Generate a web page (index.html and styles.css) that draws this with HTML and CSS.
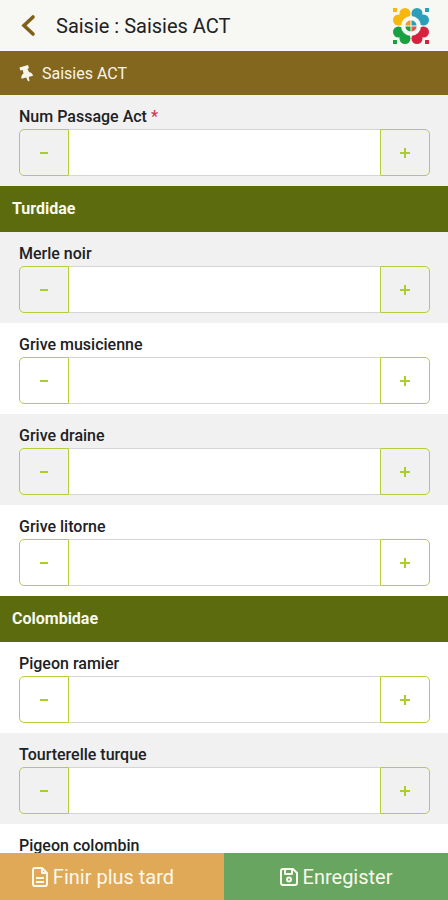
FILE: index.html
```html
<!DOCTYPE html>
<html lang="fr">
<head>
<meta charset="utf-8">
<meta name="viewport" content="width=device-width, initial-scale=1">
<title>Saisie : Saisies ACT</title>
<link rel="stylesheet" href="styles.css">
</head>
<body>
<header class="topbar">
  <button class="back" type="button" aria-label="Retour">
    <svg width="16" height="24" viewBox="0 0 16 24"><path d="M13 3 4 11.500l9 8.500" fill="none" stroke="currentColor" stroke-width="3.600" stroke-linecap="round"/></svg>
  </button>
  <h1 class="title">Saisie : Saisies ACT</h1>
  <svg class="logo" width="36" height="36" viewBox="0 0 36 36" aria-hidden="true">
    <g fill="#f6b70f"><path d="M0 0h4v4H0z"/><circle cx="12" cy="5.500" r="5.500"/><circle cx="5.500" cy="12" r="5.500"/><path d="M7 7l10-2v12H5z"/></g>
    <g fill="#2b9fb8"><path d="M32 0h4v4h-4z"/><circle cx="24" cy="5.500" r="5.500"/><circle cx="30.500" cy="12" r="5.500"/><path d="M29 7 19 5v12h12z"/></g>
    <g fill="#18a043"><path d="M0 32h4v4H0z"/><circle cx="12" cy="30.500" r="5.500"/><circle cx="5.500" cy="24" r="5.500"/><path d="M7 29l10 2V19H5z"/></g>
    <g fill="#d7213f"><path d="M32 32h4v4h-4z"/><circle cx="24" cy="30.500" r="5.500"/><circle cx="30.500" cy="24" r="5.500"/><path d="M29 29l-10 2V19h12z"/></g>
    <circle cx="18" cy="18" r="10" fill="#f8f8f4"/>
    <path d="M17.500 17.500v-5a5 5 0 0 0-5 5z" fill="#f09a28"/>
    <path d="M18.500 17.500v-5a5 5 0 0 1 5 5z" fill="#2b9fb8"/>
    <path d="M17.500 18.500v5a5 5 0 0 1-5-5z" fill="#18a043"/>
    <path d="M18.500 18.500v5a5 5 0 0 0 5-5z" fill="#e0564a"/>
  </svg>
</header>
<div class="subbar">
  <svg width="16" height="18" viewBox="0 0 16 18" aria-hidden="true"><path d="M1.500 3.500 10 1l1 3-1.500 1 1.500 3c2.200.3 3.600 1.700 4 3.800l-4.300 1.200.8 4-1.500.2-1.800-3.700-4.700 1.300c-.5-2.200.2-4 2-5.300L4.800 6l-2.500.5z" fill="currentColor"/></svg>
  <span>Saisies ACT</span>
</div>
<main class="form">
  <section class="group">
    <div class="field"><label for="passage">Num Passage Act <span class="required">*</span></label>
      <div class="stepper"><button type="button" aria-label="Diminuer"><svg class="sign" viewBox="0 0 10 10"><path d="M1 5h8"/></svg></button><input id="passage" type="text" inputmode="numeric" required><button type="button" aria-label="Augmenter"><svg class="sign" viewBox="0 0 10 10"><path d="M0 5h10M5 0v10"/></svg></button></div></div>
  </section>
  <section class="group">
    <h2>Turdidae</h2>
    <div class="field"><label for="merle">Merle noir</label>
      <div class="stepper"><button type="button" aria-label="Diminuer"><svg class="sign" viewBox="0 0 10 10"><path d="M1 5h8"/></svg></button><input id="merle" type="text" inputmode="numeric"><button type="button" aria-label="Augmenter"><svg class="sign" viewBox="0 0 10 10"><path d="M0 5h10M5 0v10"/></svg></button></div></div>
    <div class="field plain"><label for="musicienne">Grive musicienne</label>
      <div class="stepper"><button type="button" aria-label="Diminuer"><svg class="sign" viewBox="0 0 10 10"><path d="M1 5h8"/></svg></button><input id="musicienne" type="text" inputmode="numeric"><button type="button" aria-label="Augmenter"><svg class="sign" viewBox="0 0 10 10"><path d="M0 5h10M5 0v10"/></svg></button></div></div>
    <div class="field"><label for="draine">Grive draine</label>
      <div class="stepper"><button type="button" aria-label="Diminuer"><svg class="sign" viewBox="0 0 10 10"><path d="M1 5h8"/></svg></button><input id="draine" type="text" inputmode="numeric"><button type="button" aria-label="Augmenter"><svg class="sign" viewBox="0 0 10 10"><path d="M0 5h10M5 0v10"/></svg></button></div></div>
    <div class="field plain"><label for="litorne">Grive litorne</label>
      <div class="stepper"><button type="button" aria-label="Diminuer"><svg class="sign" viewBox="0 0 10 10"><path d="M1 5h8"/></svg></button><input id="litorne" type="text" inputmode="numeric"><button type="button" aria-label="Augmenter"><svg class="sign" viewBox="0 0 10 10"><path d="M0 5h10M5 0v10"/></svg></button></div></div>
  </section>
  <section class="group">
    <h2>Colombidae</h2>
    <div class="field plain"><label for="ramier">Pigeon ramier</label>
      <div class="stepper"><button type="button" aria-label="Diminuer"><svg class="sign" viewBox="0 0 10 10"><path d="M1 5h8"/></svg></button><input id="ramier" type="text" inputmode="numeric"><button type="button" aria-label="Augmenter"><svg class="sign" viewBox="0 0 10 10"><path d="M0 5h10M5 0v10"/></svg></button></div></div>
    <div class="field"><label for="turque">Tourterelle turque</label>
      <div class="stepper"><button type="button" aria-label="Diminuer"><svg class="sign" viewBox="0 0 10 10"><path d="M1 5h8"/></svg></button><input id="turque" type="text" inputmode="numeric"><button type="button" aria-label="Augmenter"><svg class="sign" viewBox="0 0 10 10"><path d="M0 5h10M5 0v10"/></svg></button></div></div>
    <div class="field plain"><label for="colombin">Pigeon colombin</label>
      <div class="stepper"><button type="button" aria-label="Diminuer"><svg class="sign" viewBox="0 0 10 10"><path d="M1 5h8"/></svg></button><input id="colombin" type="text" inputmode="numeric"><button type="button" aria-label="Augmenter"><svg class="sign" viewBox="0 0 10 10"><path d="M0 5h10M5 0v10"/></svg></button></div></div>
  </section>
</main>
<footer class="actions">
  <button class="later" type="button">
    <svg width="16" height="20" viewBox="0 0 16 20" fill="none" stroke="currentColor" stroke-width="2" stroke-linejoin="round" aria-hidden="true"><path d="M1 3a2 2 0 0 1 2-2h7l5 5v11a2 2 0 0 1-2 2H3a2 2 0 0 1-2-2z"/><path d="M10 1v5h5M4 11h8M4 15h8"/></svg>
    Finir plus tard
  </button>
  <button class="save" type="button">
    <svg width="18" height="18" viewBox="0 0 18 18" fill="none" stroke="currentColor" stroke-width="2" stroke-linejoin="round" aria-hidden="true"><path d="M1 3a2 2 0 0 1 2-2h10l4 4v10a2 2 0 0 1-2 2H3a2 2 0 0 1-2-2z"/><path d="M5 1v5h7V1"/><circle cx="9" cy="11.500" r="2"/></svg>
    Enregister
  </button>
</footer>
</body>
</html>
```
FILE: styles.css
```css
* { box-sizing: border-box; }

body {
  display: flex;
  flex-direction: column;
  height: 100vh;
  margin: 0;
  background: #fff;
  color: #202124;
  font-family: Roboto, sans-serif;
}

button {
  margin: 0;
  padding: 0;
  border: 0;
  background: none;
  font: inherit;
  cursor: pointer;
}

svg { flex: none; }

.topbar {
  display: flex;
  flex: none;
  align-items: center;
  height: 51px;
  padding: 0 19px 0 20px;
  background: #f7f7f3;
}

.back {
  display: flex;
  width: 36px;
  color: #806018;
}

.title {
  flex: 1;
  margin: 0;
  font-size: 20px;
  font-weight: 400;
  line-height: 24px;
}

.subbar {
  display: flex;
  flex: none;
  align-items: center;
  gap: 8px;
  height: 44px;
  padding: 0 18px;
  background: #84671f;
  color: #f8f5ea;
  font-size: 16px;
}

.form {
  flex: 1;
  min-height: 0;
  overflow-y: auto;
  scrollbar-width: none;
}

.group h2 {
  margin: 0;
  padding: 11px 12px;
  background: #5b6b0d;
  color: #f8f9ee;
  font-size: 16px;
  font-weight: 700;
  line-height: 24px;
}

.field {
  padding: 10px 18px 10px 19px;
  background: #f1f1f1;
}

.field.plain { background: #fff; }

.field label {
  display: block;
  font-size: 16px;
  font-weight: 500;
  line-height: 24px;
}

.required { color: #c8385a; }

.stepper {
  display: flex;
  height: 47px;
}

.stepper button {
  display: flex;
  align-items: center;
  justify-content: center;
  width: 50px;
  border: 1px solid #b3cf3c;
  border-radius: 5px 0 0 5px;
}

.stepper button:last-child { border-radius: 0 5px 5px 0; }

.stepper input {
  flex: 1;
  min-width: 0;
  padding: 0 12px;
  border: solid #d5d5d5;
  border-width: 1px 0;
  border-radius: 0;
  background: #fff;
  font: inherit;
}

.sign {
  width: 10px;
  height: 10px;
  stroke: #acce2b;
  stroke-width: 2;
}

.actions {
  display: grid;
  flex: none;
  grid-template-columns: 1fr 1fr;
  height: 47px;
}

.actions button {
  display: flex;
  align-items: center;
  justify-content: center;
  gap: 5px;
  color: #fbf8ec;
  font-size: 20px;
}

.actions .later {
  padding-right: 18px;
  background: #e0a958;
}

.actions .save { background: #67a561; }
```
